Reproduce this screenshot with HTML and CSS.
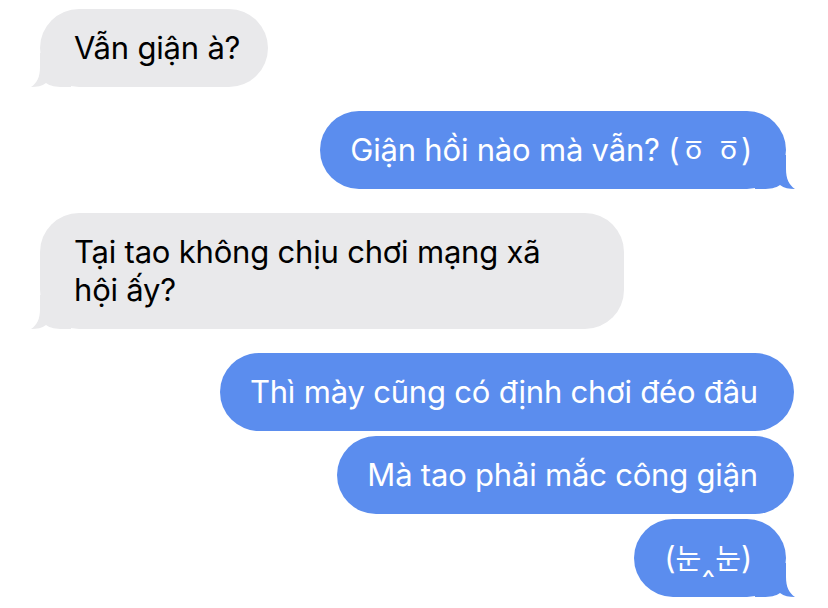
FILE: index.html
```html
<!DOCTYPE html>
<html lang="vi">
<head>
  <meta charset="UTF-8">
  <title>Tin nhắn</title>
  <link rel="stylesheet" href="styles.css">
</head>
<body>

  <div class="chat">
    <div class="bubble them tail">
      <svg class="tail-shape" viewBox="0 0 40 34" width="40" height="34"><path d="M9 0 V14 C9 24 6 30 0 34 C6 34 11 33 15 30 C19 33 25 34 32 34 H40 V0 Z"/></svg>
      <p>Vẫn giận à?</p>
    </div>

    <div class="bubble me tail">
      <svg class="tail-shape" viewBox="0 0 40 34" width="40" height="34"><path d="M9 0 V14 C9 24 6 30 0 34 C6 34 11 33 15 30 C19 33 25 34 32 34 H40 V0 Z"/></svg>
      <p>Giận hồi nào mà vẫn? (<span class="kao">ㆆ</span> <span class="kao">ㆆ</span>)</p>
    </div>

    <div class="bubble them tail wide">
      <svg class="tail-shape" viewBox="0 0 40 34" width="40" height="34"><path d="M9 0 V14 C9 24 6 30 0 34 C6 34 11 33 15 30 C19 33 25 34 32 34 H40 V0 Z"/></svg>
      <p>Tại tao không chịu chơi mạng xã hội ấy?</p>
    </div>

    <div class="bubble me">
      <p>Thì mày cũng có định chơi đéo đâu</p>
    </div>

    <div class="bubble me">
      <p>Mà tao phải mắc công giận</p>
    </div>

    <div class="bubble me tail">
      <svg class="tail-shape" viewBox="0 0 40 34" width="40" height="34"><path d="M9 0 V14 C9 24 6 30 0 34 C6 34 11 33 15 30 C19 33 25 34 32 34 H40 V0 Z"/></svg>
      <p>(<span class="kao eye">눈</span>‸<span class="kao eye">눈</span>)</p>
    </div>
  </div>

</body>
</html>
```

FILE: styles.css
```css
body {
  margin: 0;
  background: #fff;
  font-family: Inter, "Noto Sans", "Noto Sans CJK KR", sans-serif;
}

.chat {
  display: flex;
  flex-direction: column;
  padding-top: 9px;
}

.bubble {
  position: relative;
  max-width: 584px;
  box-sizing: border-box;
  border-radius: 39px;
  padding: 20px 36px 20px 30px;
  margin-top: 5px;
}

.bubble p {
  position: relative;
  margin: 0;
  font-size: 31px;
  line-height: 38px;
  letter-spacing: -0.2px;
}

.bubble.tail + .bubble {
  margin-top: 24px;
}

.chat .bubble:first-child {
  margin-top: 0;
}

.them {
  align-self: flex-start;
  margin-left: 40px;
  padding-left: 34px;
  padding-right: 28px;
  background: #e9e9eb;
  color: #000;
}

.me {
  align-self: flex-end;
  margin-right: 34px;
  background: #5b8dee;
  color: #fff;
}

.me.tail {
  margin-right: 42px;
  padding-right: 34px;
}

.wide {
  width: 584px;
  padding-right: 70px;
}

.kao {
  font-family: "Noto Sans CJK KR", sans-serif;
  font-size: 31px;
  line-height: 0;
  letter-spacing: -2px;
}

.kao.eye {
  font-size: 28px;
  letter-spacing: 0;
}

.tail-shape {
  position: absolute;
  bottom: 0;
  left: -9px;
  display: block;
}

.them .tail-shape {
  fill: #e9e9eb;
}

.me .tail-shape {
  left: auto;
  right: -9px;
  fill: #5b8dee;
  transform: scaleX(-1);
}
```
